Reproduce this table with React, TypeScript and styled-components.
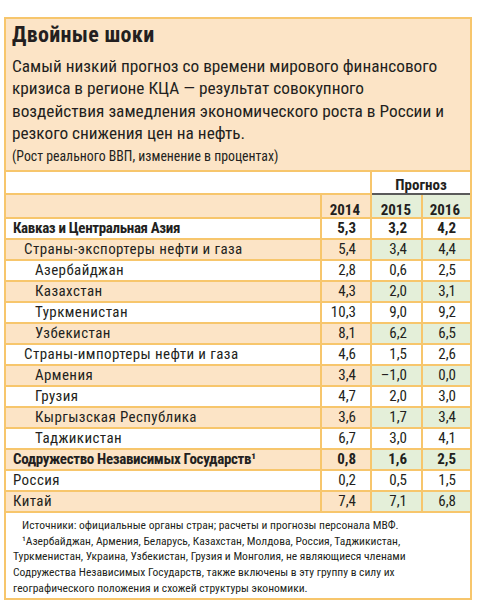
import React from 'react'
import styled, { createGlobalStyle } from 'styled-components'

const FONT = '"Roboto Condensed", "Liberation Sans Narrow", "Arial Narrow", Arial, sans-serif'
const BORDER = '#f7c66c'
const PEACH = '#fce4c6'
const GREEN = '#e4efd9'
const INK = '#231f20'

const GlobalStyle = createGlobalStyle`
  html, body {
    margin: 0;
    padding: 0;
    background: #ffffff;
  }
  body {
    font-family: ${FONT};
    color: ${INK};
  }
`

const Page = styled.div`
  width: 488px;
  height: 610px;
  padding: 17px 0 0 4px;
  box-sizing: border-box;
`

const Panel = styled.div`
  width: 468px;
  border: 2px solid ${BORDER};
  box-sizing: border-box;
  background: #ffffff;
`

const Intro = styled.div`
  background: ${PEACH};
  padding: 3px 6px 6px 6px;
  border-bottom: 2px solid ${BORDER};
`

const Title = styled.h1`
  margin: 0;
  font-size: 22px;
  line-height: 26px;
  font-weight: 700;
  letter-spacing: 0.3px;
`

const Lead = styled.p`
  margin: 7px 0 0 0;
  font-size: 17.3px;
  line-height: 22.3px;
  white-space: nowrap;
`

const Units = styled.div`
  margin-top: 4px;
  font-size: 13.8px;
  line-height: 16px;
`

const Table = styled.table`
  width: 100%;
  border-collapse: collapse;
  table-layout: fixed;
  font-size: 15px;
`

const Col = styled.col<{ w: number }>`
  width: ${({ w }) => w}px;
`

const Cell = styled.td<{ tone?: 'white' | 'peach' | 'green'; bold?: boolean }>`
  height: 19px;
  padding: 0 14px 0 0;
  line-height: 19px;
  text-align: right;
  font-weight: ${({ bold }) => (bold ? 700 : 400)};
  background: ${({ tone }) => (tone === 'peach' ? PEACH : tone === 'green' ? GREEN : '#ffffff')};
  border: 2px solid ${BORDER};
  white-space: nowrap;
  &:first-child { border-left: none; }
  &:last-child { border-right: none; }
`

const LabelCell = styled(Cell)<{ level: number }>`
  text-align: left;
  padding: 0 0 0 ${({ level }) => 7 + level * 11}px;
  letter-spacing: ${({ bold }) => (bold ? '-0.35px' : '0.4px')};
`

const ForecastCell = styled.td`
  height: 21px;
  padding: 0;
  text-align: center;
  font-weight: 700;
  vertical-align: bottom;
  line-height: 15px;
  border-left: 2px solid ${BORDER};
  border-bottom: 2px solid #5a5a5a;
`

const BlankCell = styled.td`
  height: 21px;
  padding: 0;
  border-bottom: 2px solid ${BORDER};
`

const YearCell = styled(Cell)`
  height: 22px;
  padding: 0 10px 0 0;
  line-height: 14px;
  vertical-align: bottom;
`

const Notes = styled.div`
  padding: 5px 4px 2px 7px;
  font-size: 11.55px;
  line-height: 15.6px;
  white-space: nowrap;
`

const NoteLine = styled.div<{ indent?: boolean }>`
  padding-left: ${({ indent }) => (indent ? 9 : 0)}px;
`

type Row = {
  label: string
  level: number
  bold?: boolean
  shaded?: boolean
  values: [string, string, string]
}

const rows: Row[] = [
  { label: 'Кавказ и Центральная Азия', level: 0, bold: true, values: ['5,3', '3,2', '4,2'] },
  { label: 'Страны-экспортеры нефти и газа', level: 1, shaded: true, values: ['5,4', '3,4', '4,4'] },
  { label: 'Азербайджан', level: 2, values: ['2,8', '0,6', '2,5'] },
  { label: 'Казахстан', level: 2, shaded: true, values: ['4,3', '2,0', '3,1'] },
  { label: 'Туркменистан', level: 2, values: ['10,3', '9,0', '9,2'] },
  { label: 'Узбекистан', level: 2, shaded: true, values: ['8,1', '6,2', '6,5'] },
  { label: 'Страны-импортеры нефти и газа', level: 1, values: ['4,6', '1,5', '2,6'] },
  { label: 'Армения', level: 2, shaded: true, values: ['3,4', '–1,0', '0,0'] },
  { label: 'Грузия', level: 2, values: ['4,7', '2,0', '3,0'] },
  { label: 'Кыргызская Республика', level: 2, shaded: true, values: ['3,6', '1,7', '3,4'] },
  { label: 'Таджикистан', level: 2, values: ['6,7', '3,0', '4,1'] },
  { label: 'Содружество Независимых Государств¹', level: 0, bold: true, shaded: true, values: ['0,8', '1,6', '2,5'] },
  { label: 'Россия', level: 0, values: ['0,2', '0,5', '1,5'] },
  { label: 'Китай', level: 0, shaded: true, values: ['7,4', '7,1', '6,8'] },
]

export default function App() {
  return (
    <>
      <GlobalStyle />
      <Page>
        <Panel>
          <Intro>
            <Title>Двойные шоки</Title>
            <Lead>
              Самый низкий прогноз со времени мирового финансового
              <br />
              кризиса в регионе КЦА — результат совокупного
              <br />
              воздействия замедления экономического роста в России и
              <br />
              резкого снижения цен на нефть.
            </Lead>
            <Units>(Рост реального ВВП, изменение в процентах)</Units>
          </Intro>
          <Table>
            <colgroup>
              <Col w={315} />
              <Col w={50} />
              <Col w={51} />
              <Col w={48} />
            </colgroup>
            <thead>
              <tr>
                <BlankCell />
                <BlankCell />
                <ForecastCell colSpan={2}>Прогноз</ForecastCell>
              </tr>
              <tr>
                <LabelCell as="th" level={0} tone="peach" />
                <YearCell as="th" tone="peach" bold>2014</YearCell>
                <YearCell as="th" tone="green" bold>2015</YearCell>
                <YearCell as="th" tone="green" bold>2016</YearCell>
              </tr>
            </thead>
            <tbody>
              {rows.map((r) => (
                <tr key={r.label}>
                  <LabelCell level={r.level} bold={r.bold} tone={r.shaded ? 'peach' : 'white'}>
                    {r.label}
                  </LabelCell>
                  <Cell bold={r.bold} tone={r.shaded ? 'peach' : 'white'}>{r.values[0]}</Cell>
                  <Cell bold={r.bold} tone={r.shaded ? 'green' : 'white'}>{r.values[1]}</Cell>
                  <Cell bold={r.bold} tone={r.shaded ? 'green' : 'white'}>{r.values[2]}</Cell>
                </tr>
              ))}
            </tbody>
          </Table>
          <Notes>
            <NoteLine indent>Источники: официальные органы стран; расчеты и прогнозы персонала МВФ.</NoteLine>
            <NoteLine indent>¹Азербайджан, Армения, Беларусь, Казахстан, Молдова, Россия, Таджикистан,</NoteLine>
            <NoteLine>Туркменистан, Украина, Узбекистан, Грузия и Монголия, не являющиеся членами</NoteLine>
            <NoteLine>Содружества Независимых Государств, также включены в эту группу в силу их</NoteLine>
            <NoteLine>географического положения и схожей структуры экономики.</NoteLine>
          </Notes>
        </Panel>
      </Page>
    </>
  )
}
